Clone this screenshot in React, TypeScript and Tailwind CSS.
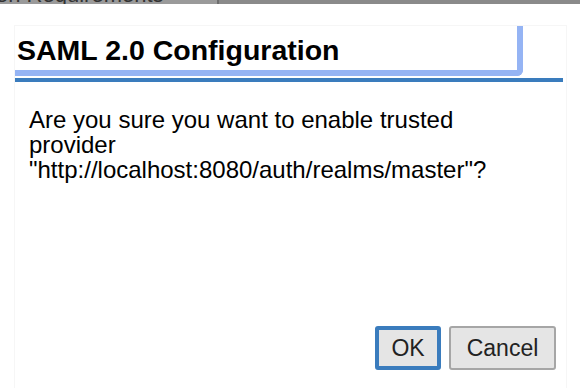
export default function App() {
  return (
    <div className="w-[580px] h-[388px] bg-white flex flex-col overflow-hidden font-['Liberation_Sans',Arial,sans-serif] text-black">
      {/* page behind the dialog, mostly hidden */}
      <div className="h-[4px] shrink-0 bg-[#8a8a8a] overflow-hidden flex">
        <div className="w-[219px] bg-[#9a9a9a] border-r-2 border-[#6e6e6e] overflow-hidden">
          <span className="block -mt-[14px] ml-[-4px] text-[22px] leading-[18px] text-[#333] whitespace-nowrap">
            on Requirements
          </span>
        </div>
      </div>

      <div className="ml-[14px] w-[553px] mt-[21px] flex-1 flex flex-col border border-[#f6f6f6] border-b-0">
        {/* header */}
        <div className="w-[508px] h-[50px] border-r-[6px] border-b-[6px] border-[#95b4f4] rounded-br-[6px] flex items-center pl-[2px] pt-[4px]">
          <h1 className="text-[28.5px] font-bold leading-none">SAML 2.0 Configuration</h1>
        </div>
        <div className="mt-[2px] w-[548px] h-[4px] bg-[#3a7cbd]" />

        {/* body */}
        <div className="flex-1 pl-[14px] pt-[25px] w-[510px] text-[24px] leading-[25px]">
          Are you sure you want to enable trusted provider
          "http://localhost:8080/auth/realms/master"?
        </div>

        {/* buttons */}
        <div className="flex justify-end gap-[8px] pr-[10px] pb-[18px]">
          <button className="h-[44px] w-[66px] bg-[#e5e5e5] border-[4px] border-[#3a7cbd] rounded-[3px] text-[23px] text-[#222]">
            OK
          </button>
          <button className="h-[44px] w-[107px] bg-[#e5e5e5] border-2 border-[#a6a6a6] rounded-[3px] text-[23px] text-[#222]">
            Cancel
          </button>
        </div>
      </div>
    </div>
  )
}
